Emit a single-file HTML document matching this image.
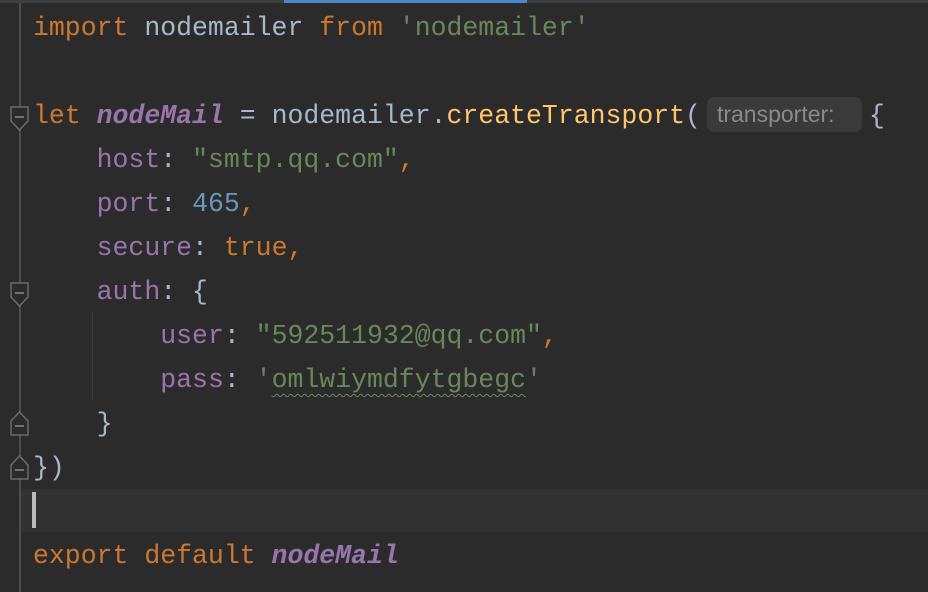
<!DOCTYPE html>
<html><head><style>
html,body{margin:0;padding:0;width:928px;height:592px;overflow:hidden;background:#2b2b2b}
.top{position:absolute;left:0;top:0;width:928px;height:3px;background:#3c3f41}
.tab{position:absolute;left:284px;top:0;width:243px;height:3px;background:#4a88c7}
.gl{position:absolute;left:19px;top:3px;width:2px;height:589px;background:#4e4e4e}
.cur{position:absolute;left:21px;top:489px;width:907px;height:43px;background:#323232}
.caret{position:absolute;left:32px;top:492px;width:4px;height:36px;background:#bbbbbb}
.ig{position:absolute;left:92px;top:312px;width:1px;height:88px;background:#3d3d3d}
.code{position:absolute;left:33px;top:6px;font-family:"Liberation Mono",monospace;font-size:26.5px;line-height:44px;color:#a9b7c6;white-space:pre}
.k{color:#cc7832}.p{color:#9876aa}.i{color:#9876aa;font-style:italic;font-weight:bold}.s{color:#6a8759}.n{color:#6897bb}.f{color:#ffc66d}
.w{text-decoration:underline wavy #6a8759;text-decoration-thickness:1px;text-underline-offset:6px}
.hint{display:inline-block;font-family:"Liberation Sans",sans-serif;font-size:23px;color:#8a8a8a;background:#3a3a3a;border-radius:7px;line-height:35px;padding:0 11px 0 10px;margin:0 7px 0 6px;vertical-align:1px;width:134px}
svg{position:absolute}
</style></head><body>
<div class="top"></div><div class="tab"></div>
<div class="cur"></div>
<div class="gl"></div>
<div class="ig"></div>
<div class="caret"></div>
<svg style="left:10px;top:106px" width="20" height="26"><path d="M1 1H18V15L9.5 24L1 15Z" fill="#2b2b2b" stroke="#6b6b6b" stroke-width="1.5"/><path d="M5 11H14" stroke="#8a8a8a" stroke-width="1.5"/></svg>
<svg style="left:10px;top:282px" width="20" height="26"><path d="M1 1H18V15L9.5 24L1 15Z" fill="#2b2b2b" stroke="#6b6b6b" stroke-width="1.5"/><path d="M5 11H14" stroke="#8a8a8a" stroke-width="1.5"/></svg>
<svg style="left:10px;top:410px" width="20" height="26"><path d="M1 25H18V11L9.5 2L1 11Z" fill="#2b2b2b" stroke="#6b6b6b" stroke-width="1.5"/><path d="M5 16H14" stroke="#8a8a8a" stroke-width="1.5"/></svg>
<svg style="left:10px;top:454px" width="20" height="26"><path d="M1 25H18V11L9.5 2L1 11Z" fill="#2b2b2b" stroke="#6b6b6b" stroke-width="1.5"/><path d="M5 16H14" stroke="#8a8a8a" stroke-width="1.5"/></svg>
<div class="code"><span class="k">import</span> nodemailer <span class="k">from</span> <span class="s">'nodemailer'</span>

<span class="k">let</span> <span class="i">nodeMail</span> = nodemailer.<span class="f">createTransport</span>(<span class="hint">transporter:</span>{
    <span class="p">host</span>: <span class="s">"smtp.qq.com"</span><span class="k">,</span>
    <span class="p">port</span>: <span class="n">465</span><span class="k">,</span>
    <span class="p">secure</span>: <span class="k">true,</span>
    <span class="p">auth</span>: {
        <span class="p">user</span>: <span class="s">"592511932@qq.com"</span><span class="k">,</span>
        <span class="p">pass</span>: <span class="s">'<span class="w">omlwiymdfytgbegc</span>'</span>
    }
})

<span class="k">export default</span> <span class="i">nodeMail</span></div>
</body></html>
